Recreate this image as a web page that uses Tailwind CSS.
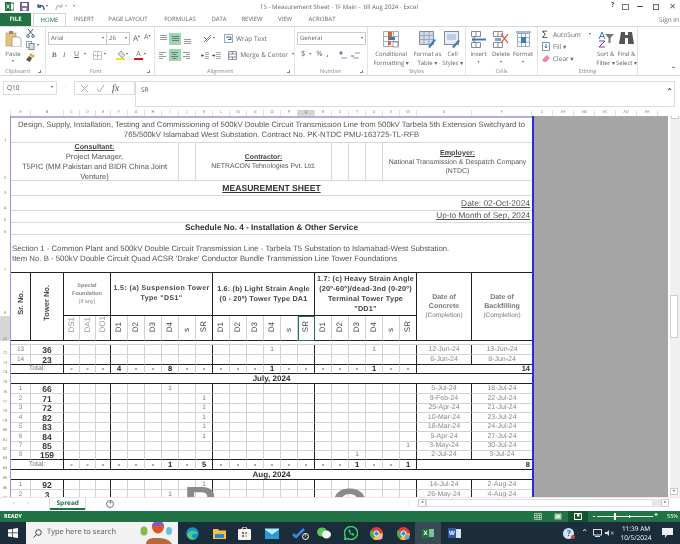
<!doctype html>
<html lang="en">
  <head>
    <meta charset="UTF-8" />
    <title>T5 - Measurement Sheet - Excel</title>
    <script src="https://cdn.jsdelivr.net/npm/@tailwindcss/browser@4"></script>
  </head>
  <body class="m-0 bg-white">
    <div class="w-[680px] h-[544px] overflow-hidden flex flex-col bg-white text-[#555] font-['Open_Sans',sans-serif] blur-[0.3px] [text-rendering:geometricPrecision]">
      <!-- title bar -->
      <div class="h-[13px] flex items-center relative text-[6px] text-[#666]">
        <svg class="ml-[5px] w-[9px] h-[9px]" viewBox="0 0 9 9"><rect x="3" y="1" width="6" height="7" fill="#fff" stroke="#217346"/><rect x="0" y="0" width="6" height="9" fill="#217346"/><path d="M1.5 2.5l3 4M4.5 2.5l-3 4" stroke="#fff"/></svg>
        <svg class="ml-[6px] w-[9px] h-[9px]" viewBox="0 0 9 9"><rect x=".5" y=".5" width="8" height="8" fill="#8a6fb0" stroke="#6a4f90"/><rect x="2" y="1" width="5" height="3" fill="#fff"/><rect x="2.5" y="6" width="4" height="2.5" fill="#fff"/></svg>
        <svg class="ml-[7px] w-[9px] h-[8px]" viewBox="0 0 9 8"><path d="M2 1v3h3M2 4c2-2.500 6-2 6 3" fill="none" stroke="#2a5a9a" stroke-width="1.300"/></svg>
        <span class="ml-[1px] text-[4px]">▾</span>
        <svg class="ml-[7px] w-[9px] h-[8px]" viewBox="0 0 9 8"><path d="M7 1v3H4M7 4C5 1.500 1 2 1 7" fill="none" stroke="#bbb" stroke-width="1.200"/></svg>
        <span class="ml-[1px] text-[4px] text-[#aaa]">▾</span>
        <span class="ml-[6px] text-[4px] text-[#888]">▾</span>
        <span class="ml-[185px] text-[6.100px] whitespace-pre">T5 - Measurement Sheet - TF Main -  till Aug 2024 - Excel</span>
        <div class="ml-auto flex items-center mr-[4px] gap-[8px] text-[#555]">
          <span class="text-[7px] font-bold">?</span>
          <span class="w-[7px] h-[6px] border border-[#777]"></span>
          <span class="w-[6px] h-px bg-[#555]"></span>
          <span class="w-[6px] h-[6px] border border-[#666] mx-[2px]"></span>
          <span class="text-[8px] leading-none">✕</span>
        </div>
      </div>
      <!-- tabs -->
      <div class="h-[13px] flex items-stretch text-[6px] text-[#666]">
        <div class="w-[31px] bg-[#217346] text-white font-bold flex items-center justify-center">FILE</div>
        <div class="ml-[2px] w-[33px] border border-b-0 border-[#d4d4d4] text-[#217346] flex items-center justify-center">HOME</div>
        <div class="w-[36px] flex items-center justify-center">INSERT</div>
        <div class="w-[52px] flex items-center justify-center">PAGE LAYOUT</div>
        <div class="w-[52px] flex items-center justify-center">FORMULAS</div>
        <div class="w-[26px] flex items-center justify-center">DATA</div>
        <div class="w-[40px] flex items-center justify-center">REVIEW</div>
        <div class="w-[26px] flex items-center justify-center">VIEW</div>
        <div class="w-[48px] flex items-center justify-center">ACROBAT</div>
        <div class="ml-auto mr-[1px] flex items-center text-[6.500px]">Sign in</div>
      </div>
      <!-- ribbon -->
      <div class="h-[50px] flex border-y border-[#d8d8d8] text-[6px] text-[#666]">
        <!-- clipboard -->
        <div class="w-[46px] shrink-0 flex flex-col border-r border-[#e2e2e2]">
          <div class="h-[40px] flex">
            <div class="w-[26px] flex flex-col items-center pt-[3px]">
              <svg class="w-[17px] h-[17px]" viewBox="0 0 17 17"><rect x="1" y="3" width="10" height="13" fill="#e8c27a" stroke="#b9914a" stroke-width=".6"/><rect x="4" y="1" width="4" height="3" fill="#888"/><path d="M7 7h7l2 2v8H7z" fill="#fff" stroke="#888" stroke-width=".7"/></svg>
              <span class="mt-[3px] leading-[8px]">Paste</span>
              <span class="text-[4px] leading-[8px]">▾</span>
            </div>
            <div class="flex flex-col items-start pt-[2px] gap-[3px]">
              <svg class="w-[9px] h-[9px]" viewBox="0 0 9 9"><path d="M2 0l5 6M7 0L2 6" stroke="#555"/><circle cx="2" cy="7.200" r="1.300" fill="none" stroke="#3a6aa0"/><circle cx="7" cy="7.200" r="1.300" fill="none" stroke="#3a6aa0"/></svg>
              <div class="flex items-center gap-[2px]"><svg class="w-[9px] h-[9px]" viewBox="0 0 9 9"><rect x=".5" y=".5" width="5" height="6" fill="#fff" stroke="#8aa"/><rect x="3" y="2.500" width="5" height="6" fill="#dde" stroke="#788"/></svg><span class="text-[4px]">▾</span></div>
              <svg class="w-[9px] h-[9px]" viewBox="0 0 9 9"><path d="M5 0l4 3-2 2-4-3z" fill="#e3b04a"/><path d="M3 3l3 2-2 4-4-2z" fill="#555"/></svg>
            </div>
          </div>
          <div class="h-[8px] flex items-center justify-between pl-[5px] pr-[4px] text-[5.500px] text-[#888]"><span>Clipboard</span><span class="w-[3px] h-[3px] border-r border-b border-[#888]"></span></div>
        </div>
        <!-- font -->
        <div class="w-[109px] shrink-0 flex flex-col border-r border-[#e2e2e2]">
          <div class="h-[40px] flex flex-col pl-[2px] pt-[5px] gap-[4px]">
            <div class="flex items-center h-[13px]">
              <div class="w-[59px] h-[13px] border border-[#ccc] flex items-center justify-between px-[2px]"><span>Arial</span><span class="text-[4px]">▾</span></div>
              <div class="w-[23px] h-[13px] border border-l-0 border-[#ccc] flex items-center justify-between px-[2px]"><span>26</span><span class="text-[4px]">▾</span></div>
              <span class="ml-[3px] text-[8px]">A</span><span class="text-[4px] -mt-[4px] text-[#3a6aa0]">▴</span>
              <span class="ml-[4px] text-[7px]">A</span><span class="text-[4px] -mt-[4px] text-[#3a6aa0]">▾</span>
            </div>
            <div class="flex items-center h-[12px] pl-[4px] text-[7px]">
              <span class="w-[11px] font-bold font-['Liberation_Serif',serif]">B</span>
              <span class="w-[11px] italic font-['Liberation_Serif',serif]">I</span>
              <span class="w-[10px] underline">U</span>
              <span class="w-[9px] text-[4px]">▾</span>
              <svg class="w-[9px] h-[9px]" viewBox="0 0 9 9"><path d="M.5.500h8v8h-8zM4.500.5v8M.5 4.500h8" fill="none" stroke="#aaa" stroke-dasharray="1 .5"/></svg>
              <span class="ml-[2px] w-[12px] text-[4px]">▾</span>
              <div class="flex flex-col items-center w-[9px]"><svg class="w-[8px] h-[7px]" viewBox="0 0 8 7"><path d="M4 0l4 4-3 3-4-4z" fill="#ddd" stroke="#777" stroke-width=".6"/></svg><span class="w-[9px] h-[2px] bg-[#f2e600]"></span></div>
              <span class="ml-[1px] w-[8px] text-[4px]">▾</span>
              <div class="flex flex-col items-center w-[9px] leading-none"><span class="text-[7px] leading-[7px]">A</span><span class="w-[9px] h-[2px] bg-[#d8141a]"></span></div>
              <span class="ml-[1px] text-[4px]">▾</span>
            </div>
          </div>
          <div class="h-[8px] flex items-center pl-[44px] pr-[4px] text-[5.500px] text-[#888]"><span>Font</span><span class="ml-auto w-[3px] h-[3px] border-r border-b border-[#888]"></span></div>
        </div>
        <!-- alignment -->
        <div class="w-[140px] shrink-0 flex flex-col border-r border-[#e2e2e2]">
          <div class="h-[40px] flex flex-col pl-[2px] pt-[5px] gap-[4px]">
            <div class="flex items-center h-[13px]">
              <div class="w-[12px] h-[12px] flex items-start justify-center pt-[2px]"><svg class="w-[9px] h-[5px]" viewBox="0 0 9 5"><path d="M1 .5h7M1 2.500h7M1 4.500h7" stroke="#999"/></svg></div>
              <div class="w-[12px] h-[12px] bg-[#9fd5b7] flex items-center justify-center"><svg class="w-[9px] h-[5px]" viewBox="0 0 9 5"><path d="M1 .5h7M1 2.500h7M1 4.500h7" stroke="#777"/></svg></div>
              <div class="w-[12px] h-[12px] flex items-end justify-center pb-[1px]"><svg class="w-[9px] h-[5px]" viewBox="0 0 9 5"><path d="M1 .5h7M1 2.500h7M1 4.500h7" stroke="#999"/></svg></div>
              <svg class="ml-[10px] w-[9px] h-[9px]" viewBox="0 0 9 9"><path d="M1 8l7-7M3 8l5-5" stroke="#888"/><path d="M1 3l3 3" stroke="#3a6aa0"/></svg>
              <span class="ml-[1px] text-[4px]">▾</span>
              <svg class="ml-[9px] w-[9px] h-[9px]" viewBox="0 0 9 9"><rect x=".5" y=".5" width="8" height="8" fill="#fff" stroke="#9ab"/><path d="M2 3h5v2.500H4" fill="none" stroke="#3a6aa0"/></svg>
              <span class="ml-[3px] text-[6.500px]">Wrap Text</span>
            </div>
            <div class="flex items-center h-[12px]">
              <div class="w-[12px] h-[12px] flex items-center justify-center"><svg class="w-[9px] h-[7px]" viewBox="0 0 9 7"><path d="M1 .5h7M1 2.500h4M1 4.500h7M1 6.500h4" stroke="#999"/></svg></div>
              <div class="w-[12px] h-[12px] bg-[#9fd5b7] flex items-center justify-center"><svg class="w-[9px] h-[7px]" viewBox="0 0 9 7"><path d="M1 .5h7M2.500 2.500h4M1 4.500h7M2.500 6.500h4" stroke="#777"/></svg></div>
              <div class="w-[12px] h-[12px] flex items-center justify-center"><svg class="w-[9px] h-[7px]" viewBox="0 0 9 7"><path d="M1 .5h7M4 2.500h4M1 4.500h7M4 6.500h4" stroke="#999"/></svg></div>
              <svg class="ml-[8px] w-[9px] h-[7px]" viewBox="0 0 9 7"><path d="M4 .5h5M4 2.500h5M4 4.500h5M4 6.500h5" stroke="#aaa"/><path d="M3 3.500H0M1.500 2L0 3.500 1.500 5" fill="none" stroke="#3a6aa0"/></svg>
              <svg class="ml-[3px] w-[9px] h-[7px]" viewBox="0 0 9 7"><path d="M4 .5h5M4 2.500h5M4 4.500h5M4 6.500h5" stroke="#aaa"/><path d="M0 3.500h3M1.500 2L3 3.500 1.500 5" fill="none" stroke="#3a6aa0"/></svg>
              <svg class="ml-[7px] w-[9px] h-[9px]" viewBox="0 0 9 9"><path d="M.5.500h8v8h-8zM.5 3h8M.5 6h8M4.500.5V3M4.500 6v2.500" fill="#fff" stroke="#889"/></svg>
              <span class="ml-[3px] text-[6.500px] whitespace-nowrap">Merge &amp; Center</span>
              <span class="ml-[4px] text-[4px]">▾</span>
            </div>
          </div>
          <div class="h-[8px] flex items-center pl-[52px] pr-[4px] text-[5.500px] text-[#888]"><span>Alignment</span><span class="ml-auto w-[3px] h-[3px] border-r border-b border-[#888]"></span></div>
        </div>
        <!-- number -->
        <div class="w-[73px] shrink-0 flex flex-col border-r border-[#e2e2e2]">
          <div class="h-[40px] flex flex-col pl-[2px] pt-[5px] gap-[4px]">
            <div class="w-[69px] h-[13px] border border-[#ccc] flex items-center justify-between px-[2px]"><span>General</span><span class="text-[4px]">▾</span></div>
            <div class="flex items-center h-[12px] text-[7.500px]">
              <span class="ml-[4px]">$</span><span class="ml-[4px] text-[4px]">▾</span>
              <span class="ml-[5px]">%</span><span class="ml-[4px] font-bold">,</span>
              <svg class="ml-[10px] w-[9px] h-[8px]" viewBox="0 0 9 8"><path d="M0 2h4M2 0v4" stroke="#3a6aa0"/><path d="M2 7h6" stroke="#999"/></svg>
              <svg class="ml-[3px] w-[9px] h-[8px]" viewBox="0 0 9 8"><path d="M4 2h5M2 7h6" stroke="#999"/><path d="M0 5h3" stroke="#3a6aa0"/></svg>
            </div>
          </div>
          <div class="h-[8px] flex items-center pl-[25px] pr-[4px] text-[5.500px] text-[#888]"><span>Number</span><span class="ml-auto w-[3px] h-[3px] border-r border-b border-[#888]"></span></div>
        </div>
        <!-- styles -->
        <div class="w-[98px] shrink-0 flex flex-col border-r border-[#e2e2e2]">
          <div class="h-[40px] flex leading-[8.500px] text-center pt-[4px]">
            <div class="w-[47px] flex flex-col items-center">
              <svg class="w-[16px] h-[17px]" viewBox="0 0 16 17"><path d="M.5.500h15v15H.5zM.5 5.500h15M.5 10.500h15M5.500.5v15M10.500.5v15" fill="#fff" stroke="#aab"/><rect x="5" y="1" width="4" height="5" fill="#e0662a"/><rect x="5" y="6" width="7" height="3" fill="#3a7ab8"/><rect x="5" y="10" width="3" height="4" fill="#e0662a"/><rect x="10" y="11" width="5" height="5" fill="#fff" stroke="#666" stroke-width=".6"/></svg>
              <span class="mt-[2px]">Conditional</span><span>Formatting ▾</span>
            </div>
            <div class="w-[26px] flex flex-col items-center">
              <svg class="w-[17px] h-[17px]" viewBox="0 0 17 17"><path d="M.5.500h14v13H.5z" fill="#cfdcec" stroke="#889"/><path d="M.5 4.500h14M.5 8.500h14M5 .5v13M10 .5v13" stroke="#9ab"/><path d="M9 16l6-8 2 1-6 8z" fill="#3a7ab8"/></svg>
              <span class="mt-[2px] whitespace-nowrap">Format as</span><span>Table ▾</span>
            </div>
            <div class="w-[25px] flex flex-col items-center">
              <svg class="w-[17px] h-[17px]" viewBox="0 0 17 17"><rect x=".5" y=".5" width="14" height="13" fill="#e8eef5" stroke="#889"/><rect x="3" y="3" width="9" height="6" fill="#b9cfe6"/><path d="M8 16l6-7 2 1-6 7z" fill="#3a7ab8"/></svg>
              <span class="mt-[2px]">Cell</span><span>Styles ▾</span>
            </div>
          </div>
          <div class="h-[8px] flex items-center justify-center text-[5.500px] text-[#888]">Styles</div>
        </div>
        <!-- cells -->
        <div class="w-[72px] shrink-0 flex flex-col border-r border-[#e2e2e2]">
          <div class="h-[40px] flex leading-[8.500px] text-center pt-[4px] pl-[1px]">
            <div class="w-[23px] flex flex-col items-center">
              <svg class="w-[16px] h-[17px]" viewBox="0 0 16 17"><path d="M.5.500h9v5h-9zM.5 11.500h9v5h-9zM5 .5v5M5 11.500v5" fill="#fff" stroke="#889"/><path d="M1 8.500h14" stroke="#3a7ab8" stroke-width="2"/><path d="M4 6L1 8.500 4 11" fill="none" stroke="#3a7ab8"/></svg>
              <span class="mt-[2px]">Insert</span><span class="text-[4px]">▾</span>
            </div>
            <div class="w-[22px] flex flex-col items-center">
              <svg class="w-[16px] h-[17px]" viewBox="0 0 16 17"><path d="M.5.500h9v5h-9zM.5 11.500h9v5h-9zM5 .5v5M5 11.500v5" fill="#fff" stroke="#889"/><rect x="2" y="7" width="6" height="3" fill="#7ab"/><path d="M8 3l7 9M15 3l-7 9" stroke="#e0402a" stroke-width="1.200"/></svg>
              <span class="mt-[2px]">Delete</span><span class="text-[4px]">▾</span>
            </div>
            <div class="w-[22px] flex flex-col items-center">
              <svg class="w-[17px] h-[17px]" viewBox="0 0 17 17"><path d="M2.500 2.500h12v13h-12zM6.500 2.500v13M10.500 2.500v13M2.500 6.500h12M2.500 11h12" fill="#fff" stroke="#9ab"/><rect x="6" y="6" width="5" height="6" fill="#3a7ab8"/><path d="M1 1h15" stroke="#3a7ab8"/></svg>
              <span class="mt-[2px]">Format</span><span class="text-[4px]">▾</span>
            </div>
          </div>
          <div class="h-[8px] flex items-center justify-center text-[5.500px] text-[#888]">Cells</div>
        </div>
        <!-- editing -->
        <div class="w-[100px] shrink-0 flex flex-col border-r border-[#e2e2e2]">
          <div class="h-[40px] flex pl-[4px] pt-[3px]">
            <div class="w-[54px] flex flex-col gap-[3px] text-[6.500px] leading-[9px]">
              <div class="flex items-center whitespace-nowrap"><span class="w-[10px] text-[10px] leading-[9px] text-[#333]">Σ</span><span class="ml-[1px]">AutoSum</span><span class="ml-[8px] text-[4px]">▾</span></div>
              <div class="flex items-center"><svg class="w-[8px] h-[9px]" viewBox="0 0 8 9"><rect x=".5" y=".5" width="7" height="8" fill="#fff" stroke="#8899aa"/><path d="M4 2v4M2.500 4.500L4 6l1.500-1.500" fill="none" stroke="#3a7ab8"/></svg><span class="ml-[3px]">Fill ▾</span></div>
              <div class="flex items-center"><svg class="w-[8px] h-[9px]" viewBox="0 0 8 9"><path d="M5 1l3 3-4 4H2L0 6z" fill="#ea8a9a"/></svg><span class="ml-[3px]">Clear ▾</span></div>
            </div>
            <div class="w-[21px] flex flex-col items-center leading-[8.500px] text-center">
              <svg class="w-[16px] h-[17px] mt-[1px]" viewBox="0 0 16 17"><path d="M4 1L1 8M4 1l3 7M2 5.500h4" fill="none" stroke="#3a7ab8"/><path d="M1 10h6L1 16h6" fill="none" stroke="#7a3ab0"/><path d="M7 3h9l-3.500 4v5h-2V7z" fill="#777"/></svg>
              <span class="mt-[2px] whitespace-nowrap">Sort &amp;</span><span class="whitespace-nowrap">Filter ▾</span>
            </div>
            <div class="w-[21px] flex flex-col items-center leading-[8.500px] text-center">
              <svg class="w-[15px] h-[14px] mt-[1px] mb-[3px]" viewBox="0 0 15 14"><path d="M2 1h4v3h3V1h4l2 12H9V7H6v6H0z" fill="#555"/></svg>
              <span class="mt-[2px] whitespace-nowrap">Find &amp;</span><span class="whitespace-nowrap">Select ▾</span>
            </div>
          </div>
          <div class="h-[8px] flex items-center justify-center text-[5.500px] text-[#888]">Editing</div>
        </div>
        <div class="flex-1 flex items-end justify-end pr-[4px] pb-[1px] text-[6px] font-bold">⌃</div>
      </div>
      <!-- formula bar -->
      <div class="h-[34px] flex items-start pt-[5px] text-[6.500px]">
        <div class="ml-[3px] w-[54px] h-[14px] border border-[#ddd] flex items-center justify-between px-[3px]"><span>Q10</span><span class="text-[4px]">▾</span></div>
        <span class="ml-[6px] mt-[3px] text-[#bbb] text-[5px] leading-[7px]">⋮</span>
        <div class="ml-[6px] w-[61px] h-[14px] border border-[#ddd] flex items-center gap-[7px] pl-[5px]">
          <svg class="w-[9px] h-[9px]" viewBox="0 0 9 9"><path d="M1 1l7 7M8 1L1 8" stroke="#aaa"/></svg>
          <svg class="w-[9px] h-[9px]" viewBox="0 0 9 9"><path d="M1 5l2.500 3L8 1" fill="none" stroke="#aaa"/></svg>
          <span class="font-['Liberation_Serif',serif] italic text-[10px] text-[#444]">fx</span>
        </div>
        <div class="w-[540px] h-[26px] border border-[#ddd] pl-[5px] pt-[3px] flex justify-between pr-[1px]"><span>SR</span><span class="self-start mt-[3px] text-[8px] font-bold leading-none">⌃</span></div>
      </div>
      <!-- column letters -->
      <div class="h-[6px] flex text-[4px] leading-[6px] text-center text-[#777] [&>span]:border-r [&>span]:border-[#e0e0e0]">
        <span class="w-[11px]"></span>
        <span class="w-[20px]">A</span><span class="w-[33px]">B</span><span class="w-[16px]">C</span><span class="w-[16px]">D</span><span class="w-[15px]">E</span>
        <span class="w-[17px]">F</span><span class="w-[17px]">G</span><span class="w-[17px]">H</span><span class="w-[17px]">I</span><span class="w-[17px]">J</span><span class="w-[17px]">K</span>
        <span class="w-[17px]">L</span><span class="w-[17px]">M</span><span class="w-[17px]">N</span><span class="w-[17px]">O</span><span class="w-[17px]">P</span>
        <span class="w-[17px] bg-[#d4d4d4] border-b border-b-[#217346]">Q</span>
        <span class="w-[17px]">R</span><span class="w-[17px]">S</span><span class="w-[17px]">T</span><span class="w-[17px]">U</span><span class="w-[17px]">V</span><span class="w-[17px]">W</span>
        <span class="w-[55px]">X</span><span class="w-[60px]">Y</span>
        <span class="w-[21px]">Z</span><span class="w-[21px]">AA</span><span class="w-[21px]">AB</span><span class="w-[21px]">AC</span><span class="w-[21px]">AD</span><span class="w-[21px]">AE</span>
      </div>
      <!-- sheet -->
      <div class="h-[381px] flex overflow-hidden">
        <div class="w-[532px] h-[381px] overflow-hidden relative shrink-0">
          <table class="table-fixed w-[532px] border-separate border-spacing-0 font-['Liberation_Sans',sans-serif] text-[#555]">
            <colgroup>
              <col class="w-[11px]" /><col class="w-[20px]" /><col class="w-[33px]" /><col class="w-[16px]" /><col class="w-[16px]" /><col class="w-[15px]" />
              <col class="w-[17px]" /><col class="w-[17px]" /><col class="w-[17px]" /><col class="w-[17px]" /><col class="w-[17px]" /><col class="w-[17px]" />
              <col class="w-[17px]" /><col class="w-[17px]" /><col class="w-[17px]" /><col class="w-[17px]" /><col class="w-[17px]" /><col class="w-[17px]" />
              <col class="w-[17px]" /><col class="w-[17px]" /><col class="w-[17px]" /><col class="w-[17px]" /><col class="w-[17px]" /><col class="w-[17px]" />
              <col class="w-[55px]" /><col class="w-[60px]" />
            </colgroup>
            <tbody id="sheet">
              <tr class="h-[27px]">
                <td class="border-r border-[#9a94d8] p-0 text-[4px] text-center align-bottom text-[#777]">1</td>
                <td colspan="25" class="border-t-2 border-t-[#b3aee0] border-b border-b-[#d8d8d8] p-0 text-center text-[7.750px] leading-[10px] whitespace-nowrap">Design, Supply, Installation, Testing and Commissioning of 500kV Double Circuit Transmission Line from 500kV Tarbela 5th Extension Switchyard to<br />765/500kV Islamabad West Substation. Contract No. PK-NTDC PMU-163725-TL-RFB</td>
              </tr>
              <tr class="h-[38px]">
                <td class="border-r border-[#9a94d8] p-0 text-[4px] text-center align-bottom text-[#777]">2</td>
                <td colspan="9" class="border-r border-b border-[#d8d8d8] p-0 text-center text-[7.600px] whitespace-nowrap"><div class="h-[37px] flex flex-col justify-center leading-[10px]"><span class="font-bold underline text-[7.200px] text-[#444]">Consultant:</span><span>Project Manager,</span><span>T5PIC (MM Pakistan and BIDR China Joint</span><span>Venture)</span></div></td>
                <td class="border-r border-b border-[#d8d8d8] p-0"></td>
                <td colspan="8" class="border-r border-b border-[#d8d8d8] p-0 text-center text-[6.900px] leading-[9px] whitespace-nowrap"><span class="font-bold underline text-[#444]">Contractor:</span><br />NETRACON Tehnologies Pvt. Ltd.</td>
                <td class="border-r border-b border-[#d8d8d8] p-0"></td>
                <td class="border-r border-b border-[#d8d8d8] p-0"></td>
                <td class="border-r border-b border-[#d8d8d8] p-0"></td>
                <td colspan="4" class="border-b border-[#d8d8d8] p-0 text-center text-[6.950px] leading-[9px] whitespace-nowrap"><span class="font-bold underline text-[7.200px] text-[#444]">Employer:</span><br />National Transmission &amp; Despatch Company<br />(NTDC)</td>
              </tr>
              <tr class="h-[15px]">
                <td class="border-r border-[#9a94d8] p-0 text-[4px] text-center align-bottom text-[#777]">3</td>
                <td colspan="25" class="border-b border-[#d8d8d8] p-0 text-center text-[8.600px] font-bold underline text-[#333] leading-none">MEASUREMENT SHEET</td>
              </tr>
              <tr class="h-[15px]">
                <td class="border-r border-[#9a94d8] p-0 text-[4px] text-center align-bottom text-[#777]">4</td>
                <td colspan="25" class="border-b border-[#d8d8d8] p-0 pr-[2px] text-right text-[8.400px] underline leading-none">Date: 02-Oct-2024</td>
              </tr>
              <tr class="h-[12px]">
                <td class="border-r border-[#9a94d8] p-0 text-[4px] text-center align-bottom text-[#777]">5</td>
                <td colspan="25" class="border-b border-[#d8d8d8] p-0 pr-[2px] text-right text-[8.200px] underline leading-none">Up-to Month of Sep, 2024</td>
              </tr>
              <tr class="h-[12px]">
                <td class="border-r border-[#9a94d8] p-0 text-[4px] text-center align-bottom text-[#777]">6</td>
                <td colspan="25" class="border-b border-[#d8d8d8] p-0 text-center text-[8.200px] font-bold text-[#333] leading-none">Schedule No. 4 - Installation &amp; Other Service</td>
              </tr>
              <tr class="h-[38px]">
                <td class="border-r border-[#9a94d8] p-0 text-[4px] text-center align-bottom text-[#777]">7</td>
                <td colspan="25" class="border-b border-b-[#222] p-0 pl-[1px] text-left text-[7.800px] leading-[10px] whitespace-nowrap">Section 1 - Common Plant and 500kV Double Circuit Transmission Line - Tarbela T5 Substation to Islamabad-West Substation.<br />Item No. B - 500kV Double Circuit Quad ACSR 'Drake' Conductor Bundle Transmission Line Tower Foundations</td>
              </tr>
              <tr class="h-[43px]">
                <td class="border-r border-[#9a94d8] p-0 text-[4px] text-center align-bottom text-[#777]">9</td>
                <td rowspan="2" class="border-r border-b border-[#222] p-0 text-center align-middle"><span class="[writing-mode:vertical-rl] rotate-180 font-bold text-[7.500px] text-[#444] leading-none">Sr. No.</span></td>
                <td rowspan="2" class="border-r border-b border-[#222] p-0 text-center align-middle"><span class="[writing-mode:vertical-rl] rotate-180 font-bold text-[7.500px] text-[#444] leading-none">Tower No.</span></td>
                <td colspan="3" class="border-r border-b border-[#222] p-0 text-center align-middle font-bold text-[5.500px] leading-[8px] text-[#888]">Special<br />Foundation<br /><span class="font-normal">(if any)</span></td>
                <td colspan="6" class="border-r border-b border-[#222] p-0 text-center align-middle font-bold text-[7px] tracking-[0.4px] leading-[10px] text-[#444] whitespace-nowrap">1.5: (a) Suspension Tower<br />Type "DS1"</td>
                <td colspan="6" class="border-r border-b border-[#222] p-0 text-center align-middle font-bold text-[7.200px] tracking-[0.2px] leading-[10px] text-[#444] whitespace-nowrap">1.6: (b) Light Strain Angle<br />(0 - 20º) Tower Type DA1</td>
                <td colspan="6" class="border-r border-b border-[#222] p-0 text-center align-middle font-bold text-[7.300px] tracking-[0.2px] leading-[10px] text-[#444] whitespace-nowrap">1.7: (c) Heavy Strain Angle<br />(20º-60º)/dead-3nd (0-20º)<br />Terminal Tower Type<br />"DD1"</td>
                <td rowspan="2" class="border-r border-b border-[#222] p-0 text-center align-middle font-bold text-[7px] leading-[9px] text-[#777]">Date of<br />Concrete<br /><span class="font-normal text-[6.500px]">(Completion)</span></td>
                <td rowspan="2" class="border-b border-[#222] p-0 text-center align-middle font-bold text-[7px] leading-[9px] text-[#777]">Date of<br />Backfilling<br /><span class="font-normal text-[6.500px]">(Completion)</span></td>
              </tr>
            </tbody>
          </table>
          <!-- page watermark sits over the last rows -->
          <span class="absolute left-[184px] top-[365px] text-[48px] leading-none font-bold text-[#8a8a8a] font-['Liberation_Sans',sans-serif]">P</span>
          <span class="absolute left-[331px] top-[367px] text-[48px] leading-none font-bold text-[#8a8a8a] font-['Liberation_Sans',sans-serif]">O</span>
        </div>
        <div class="w-[136px] h-[381px] bg-[#a5a5a5] border-l-2 border-[#2a2ae0] shrink-0"></div>
        <div class="w-[2px] bg-white"></div>
        <!-- vertical scrollbar -->
        <div class="w-[10px] bg-[#f0f0f0] flex flex-col relative items-center text-[4px]">
          <div class="h-[7px] w-[8px] mt-[-4px] bg-white border border-[#ccc] text-center leading-[6px]">▴</div>
          <div class="absolute top-[179px] left-0 w-[8px] h-[43px] bg-white border border-[#ccc]"></div>
          <div class="absolute top-[372px] left-0 w-[8px] h-[7px] bg-white border border-[#ccc] text-center leading-[6px]">▾</div>
        </div>
      </div>
      <!-- sheet tabs -->
      <div class="h-[14px] flex items-stretch bg-white text-[6.500px] border-t border-[#e8e8e8]">
        <span class="ml-[13px] text-[#bbb] text-[7px] leading-[12px]">‹</span>
        <span class="ml-[12px] text-[#bbb] text-[7px] leading-[12px]">›</span>
        <div class="ml-[21px] w-[35px] h-[12px] border-b-2 border-[#217346] text-[#217346] font-bold text-center leading-[10px] shadow-[1px_0_0_#ddd,-1px_0_0_#ddd]">Spread</div>
        <div class="ml-[21px] mt-[2px] w-[8px] h-[8px] rounded-full border border-[#777] text-[#666] text-[7px] leading-[6px] text-center">+</div>
        <span class="ml-[291px] text-[#ccc] text-[7px] leading-[11px]">⋮</span>
        <div class="ml-[6px] mt-[1px] w-[8px] h-[8px] border border-[#ccc] text-[4px] leading-[6px] text-center">◂</div>
        <div class="w-[227px] mt-[1px] h-[8px] bg-white border border-[#ddd]"></div>
        <div class="w-[8px] mt-[1px] h-[8px] bg-[#e8e8e8]"></div>
        <div class="w-[8px] mt-[1px] h-[8px] border border-[#ccc] text-[4px] leading-[6px] text-center">▸</div>
      </div>
      <!-- status bar -->
      <div class="h-[11px] bg-[#217346] text-white text-[5.500px] flex items-center">
        <span class="ml-[4px] font-bold">READY</span>
        <svg class="ml-[512px] w-[8px] h-[7px]" viewBox="0 0 8 7"><path d="M.5.500h7v6h-7zM.5 2.500h7M.5 4.500h7M3 .5v6M5.500.5v6" fill="none" stroke="#d8e8df" stroke-width=".6"/></svg>
        <svg class="ml-[12px] w-[8px] h-[7px]" viewBox="0 0 8 7"><rect x=".5" y=".5" width="7" height="6" fill="#a8c8b5"/><rect x="2" y="2" width="4" height="3" fill="#d8e8df"/></svg>
        <div class="ml-[6px] w-[20px] h-[11px] bg-[#14532e] flex items-center justify-center"><svg class="w-[8px] h-[7px]" viewBox="0 0 8 7"><path d="M.5.500h7v6h-7z" fill="none" stroke="#fff"/><path d="M3 .5h2.500v3H3z" fill="#fff"/></svg></div>
        <span class="ml-[5px] w-[2px] h-px bg-white"></span>
        <div class="ml-[2px] w-[56px] h-px bg-white relative"><span class="absolute left-[17px] -top-[3px] w-[2px] h-[7px] bg-white"></span><span class="absolute left-[32px] -top-[1px] w-px h-[3px] bg-white"></span></div>
        <span class="ml-[1px] text-[7px] font-bold">+</span>
        <span class="ml-[9px]">55%</span>
      </div>
      <!-- taskbar -->
      <div class="h-[22px] bg-[#1b2d3a] flex items-center relative text-white">
        <svg class="ml-[8px] w-[10px] h-[10px]" viewBox="0 0 10 10"><path d="M0 1.500l4.300-.6v3.700H0zM5 .8L10 0v4.600H5zM0 5.300h4.300V9L0 8.400zM5 5.300h5V10L5 9.200z" fill="#fff"/></svg>
        <div class="ml-[8px] w-[152px] h-[22px] bg-[#f2f2f2] flex items-center relative overflow-hidden text-[#555] font-['Open_Sans',sans-serif]">
          <svg class="ml-[7px] w-[9px] h-[9px]" viewBox="0 0 9 9"><circle cx="5.500" cy="3.500" r="2.800" fill="none" stroke="#444"/><path d="M3.500 5.500L.5 8.500" stroke="#444"/></svg>
          <span class="ml-[5px] text-[7.500px]">Type here to search</span>
          <svg class="absolute left-[114px] top-0 w-[36px] h-[22px]" viewBox="0 0 36 22"><ellipse cx="4" cy="9" rx="3.500" ry="4.500" fill="#8ab84a"/><ellipse cx="18" cy="5" rx="6" ry="6.500" fill="#e0552a"/><path d="M12 4a6 5 0 0 1 12 0z" fill="#8a5ac0"/><ellipse cx="29" cy="9" rx="3" ry="4" fill="#6ac0e0"/><path d="M6 22c0-4 4-6 8-6s14-1 18 6z" fill="#b8683a"/></svg>
        </div>
        <!-- pinned apps -->
        <svg class="ml-[8px] w-[13px] h-[13px]" viewBox="0 0 13 13"><circle cx="6.500" cy="6.500" r="6.200" fill="#1a8fd0"/><path d="M1 8c1-5 9-6 11-1-2-1-6-1-6 2 0 2 3 3 5 2-3 3-9 2-10-3z" fill="#4ad07a"/></svg>
        <svg class="ml-[14px] w-[13px] h-[11px]" viewBox="0 0 13 11"><path d="M0 1h5l1 1.500h7V11H0z" fill="#f5c242"/><rect x="2" y="6" width="9" height="4" fill="#2a8ad0"/></svg>
        <svg class="ml-[12px] w-[13px] h-[13px]" viewBox="0 0 13 13"><rect y="2" width="13" height="11" rx="1" fill="#f5f5f5"/><path d="M4 2a2.500 2 0 0 1 5 0" fill="none" stroke="#eee"/><rect x="4" y="5" width="2" height="2" fill="#e0402a"/><rect x="7" y="5" width="2" height="2" fill="#6ab04a"/><rect x="4" y="8" width="2" height="2" fill="#2a8ad0"/><rect x="7" y="8" width="2" height="2" fill="#f5c242"/></svg>
        <svg class="ml-[14px] w-[14px] h-[11px]" viewBox="0 0 14 11"><rect width="14" height="11" fill="#2a9ad8"/><path d="M0 1l7 5 7-5" fill="#bfe6f8" stroke="#fff" stroke-width=".8"/></svg>
        <svg class="ml-[13px] w-[13px] h-[11px]" viewBox="0 0 13 11"><path d="M1 6l3 3 8-8" fill="none" stroke="#3a8ae0" stroke-width="2.500"/></svg>
        <span class="-ml-[3px] mt-[6px] w-[7px] h-[7px] rounded-full bg-[#333] border border-white text-[5px] leading-[5px] text-center">1</span>
        <svg class="ml-[8px] w-[14px] h-[12px]" viewBox="0 0 14 12"><ellipse cx="5" cy="5" rx="5" ry="4.500" fill="#5ac85a"/><ellipse cx="9.500" cy="7.500" rx="4.500" ry="4" fill="#f2f2f2"/></svg>
        <svg class="ml-[13px] w-[14px] h-[14px]" viewBox="0 0 14 14"><path d="M7 .5a6.500 6.500 0 0 0-5.600 9.800L.5 13.500l3.300-.9A6.500 6.500 0 1 0 7 .5z" fill="none" stroke="#3ad06a" stroke-width="1.500"/><path d="M4.500 4c0 3 2.500 5.500 5.500 5.500l.5-1.500-2-1-1 .8-1.500-1.500.8-1-1-2z" fill="#3ad06a"/></svg>
        <svg class="ml-[12px] w-[13px] h-[13px]" viewBox="0 0 13 13"><circle cx="6.500" cy="6.500" r="6.500" fill="#e0402a"/><path d="M6.500 6.500L13 6.500A6.500 6.500 0 0 1 3 12z" fill="#f5c242"/><path d="M6.500 6.500L3 12A6.500 6.500 0 0 1 .9 3.200z" fill="#4ab04a"/><circle cx="6.500" cy="6.500" r="2.600" fill="#3a8ae0" stroke="#fff"/><circle cx="10" cy="10" r="2.500" fill="#f2b8c0"/></svg>
        <svg class="ml-[14px] w-[13px] h-[13px]" viewBox="0 0 13 13"><circle cx="6.500" cy="6.500" r="6.500" fill="#e0402a"/><path d="M6.500 6.500L13 6.500A6.500 6.500 0 0 1 3 12z" fill="#f5c242"/><path d="M6.500 6.500L3 12A6.500 6.500 0 0 1 .9 3.200z" fill="#4ab04a"/><circle cx="6.500" cy="6.500" r="2.600" fill="#3a8ae0" stroke="#fff"/><circle cx="10" cy="10" r="2.500" fill="#8a9ab0"/></svg>
        <div class="ml-[5px] w-[26px] h-[22px] bg-[#3a4a55] flex items-center justify-center">
          <div class="flex items-center"><span class="w-[7px] h-[9px] bg-[#217346] text-[6px] font-bold leading-[9px] text-center">X</span><span class="w-[5px] h-[8px] bg-[#7fbf9a]"></span></div>
        </div>
        <div class="ml-[7px] flex items-center"><span class="w-[8px] h-[10px] bg-[#2a5cab] text-[6px] font-bold leading-[10px] text-center">W</span><span class="w-[5px] h-[9px] bg-[#d8e4f5]"></span></div>
        <!-- tray -->
        <div class="ml-auto flex items-center">
          <span class="w-[11px] h-[11px] rounded-full bg-[#cfe3f5] text-[#2a5a9a] text-[8px] font-bold leading-[11px] text-center relative">?<span class="absolute -right-[1px] bottom-0 w-[4px] h-[4px] rounded-full bg-[#e0402a]"></span></span>
          <span class="ml-[7px] text-[8px] leading-none">⌃</span>
          <svg class="ml-[5px] w-[9px] h-[8px]" viewBox="0 0 9 8"><rect x=".5" y=".5" width="8" height="5.500" fill="none" stroke="#ddd"/><path d="M2 7.500h5" stroke="#ddd"/></svg>
          <svg class="ml-[3px] w-[9px] h-[8px]" viewBox="0 0 9 8"><path d="M0 3h2l2-2v6L2 5H0z" fill="#ddd"/><path d="M6 2.500l2.500 3M8.500 2.500L6 5.500" stroke="#ddd" stroke-width=".7"/></svg>
          <div class="ml-[7px] w-[30px] text-center text-[6.500px] leading-[9px] whitespace-nowrap flex flex-col items-center"><span>11:39 AM</span><span>10/5/2024</span></div>
          <svg class="ml-[11px] mr-[7px] w-[11px] h-[10px]" viewBox="0 0 11 10"><path d="M0 0h11v7H5L3 10V7H0z" fill="#eee"/></svg>
        </div>
      </div>
    </div>
    <script>
      // body rows of the sheet, built from the data below
      const sheet = document.getElementById("sheet");
      const thick = [1, 4, 10, 16, 22, 23];
      const vline = (i) => (thick.includes(i) ? "border-r border-r-[#222]" : "border-r border-r-[#d2d2d2]");
      const head = (label, cls = "") => `<td class="border-r border-[#9a94d8] p-0 text-[4px] leading-[4px] text-center align-bottom text-[#777] ${cls}">${label}</td>`;

      // rotated sub-headers, row 10
      const subs = ["DS1", "DA1", "DO1", "D1", "D2", "D3", "D4", "s", "SR", "D1", "D2", "D3", "D4", "s", "SR", "D1", "D2", "D3", "D4", "s", "SR"];
      let html = `<tr class="h-[24px]">${head("10", "bg-[#d6d6d6]")}`;
      subs.forEach((s, n) => {
        const i = n + 2;
        const tone = n < 3 ? "text-[#999]" : "text-[#444]";
        const pick = i === 16 ? "outline outline-[#217346] -outline-offset-1" : "";
        html += `<td class="${vline(i)} border-b border-b-[#222] p-0 text-center align-middle ${pick}"><span class="[writing-mode:vertical-rl] rotate-180 text-[8px] leading-none ${tone}">${s}</span></td>`;
      });
      html += `</tr><tr class="h-[4px]">${head("")}<td colspan="25" class="border-b border-b-[#d2d2d2] p-0"></td></tr>`;

      const row = (label, h, sr, tower, marks, d1, d2, last) => {
        const under = last ? "border-b border-b-[#222]" : "border-b border-b-[#d2d2d2]";
        let r = `<tr class="${h}">${head(label)}`;
        r += `<td class="${vline(0)} ${under} p-0 text-center leading-[8px] text-[6.500px] text-[#888]">${sr}</td>`;
        r += `<td class="${vline(1)} ${under} p-0 text-center leading-[8px] text-[8.500px] font-bold text-[#333]">${tower}</td>`;
        for (let i = 2; i < 23; i++) {
          r += `<td class="${vline(i)} ${under} p-0 text-center leading-[8px] text-[6.500px] text-[#777]">${marks[i] || ""}</td>`;
        }
        r += `<td class="${vline(23)} ${under} p-0 text-center leading-[8px] text-[7px] text-[#888]">${d1}</td>`;
        r += `<td class="${under} p-0 text-center leading-[8px] text-[7px] text-[#888]">${d2}</td></tr>`;
        return r;
      };
      const total = (label, h, vals, sum) => {
        let r = `<tr class="${h}">${head(label)}<td colspan="2" class="border-r border-r-[#222] border-b border-b-[#222] p-0 text-center leading-[8px] text-[7px] text-[#777]">Total:</td>`;
        vals.forEach((v, n) => {
          const big = v === "-" ? "text-[#555]" : "text-[#222]";
          r += `<td class="${vline(n + 2)} border-b border-b-[#222] p-0 text-center leading-[8px] text-[7.500px] font-bold ${big}">${v}</td>`;
        });
        r += `<td colspan="2" class="border-b border-b-[#222] p-0 pr-[2px] text-right leading-[8px] text-[7.500px] font-bold text-[#333]">${sum}</td></tr>`;
        return r;
      };
      const month = (label, h, name) => `<tr class="${h}">${head(label)}<td colspan="25" class="border-b border-b-[#222] p-0 text-center leading-[8px] text-[8px] font-bold text-[#333]">${name}</td></tr>`;

      const H10 = "h-[10px]", H9 = "h-[9px]";
      html += row("72", H10, 13, 36, { 14: 1, 20: 1 }, "12-Jun-24", "13-Jun-24");
      html += row("73", H10, 14, 23, {}, "6-Jun-24", "8-Jun-24", true);
      html += total("74", H9, ["-", "-", "-", 4, "-", "-", 8, "-", "-", "-", "-", "-", 1, "-", "-", "-", "-", "-", 1, "-", "-"], 14);
      html += month("75", H10, "July, 2024");
      html += row("76", H10, 1, 66, { 8: 1 }, "5-Jul-24", "18-Jul-24");
      html += row("77", H10, 2, 71, { 10: 1 }, "9-Feb-24", "22-Jul-24");
      html += row("78", H9, 3, 72, { 10: 1 }, "25-Apr-24", "21-Jul-24");
      html += row("79", H10, 4, 82, { 10: 1 }, "10-Mar-24", "23-Jul-24");
      html += row("80", H9, 5, 83, { 10: 1 }, "18-Mar-24", "24-Jul-24");
      html += row("81", H10, 6, 84, { 10: 1 }, "5-Apr-24", "27-Jul-24");
      html += row("82", H9, 7, 85, { 22: 1 }, "3-May-24", "30-Jul-24");
      html += row("83", H9, 8, 159, { 19: 1 }, "2-Jul-24", "3-Jul-24", true);
      html += total("84", H10, ["-", "-", "-", "-", "-", "-", 1, "-", 5, "-", "-", "-", "-", "-", "-", "-", "-", 1, "-", "-", 1], 8);
      html += month("85", H10, "Aug, 2024");
      html += row("86", H10, 1, 92, { 10: 1 }, "14-Jul-24", "2-Aug-24");
      html += row("87", H10, 2, 3, { 8: 1 }, "26-May-24", "4-Aug-24");
      sheet.insertAdjacentHTML("beforeend", html);
    </script>
  </body>
</html>
